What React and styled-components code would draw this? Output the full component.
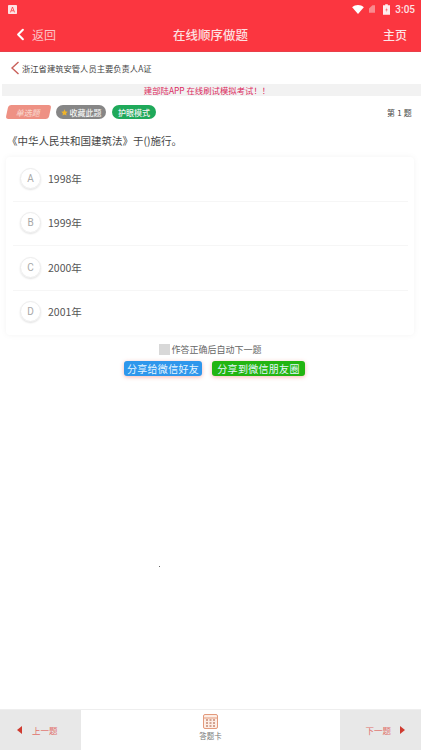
import React from 'react';
import styled, { createGlobalStyle } from 'styled-components';
import { ChevronLeft } from 'lucide-react';

const CJK = `"Noto Sans CJK SC", "Noto Sans", sans-serif`;

const GlobalStyle = createGlobalStyle`
  html, body { margin: 0; padding: 0; background: #fff; }
  body { font-family: ${CJK}; }
  * { box-sizing: border-box; }
`;

const Page = styled.div`
  position: relative;
  width: 421px;
  height: 750px;
  display: flex;
  flex-direction: column;
  overflow: hidden;
  background: #fff;
`;

const RedTop = styled.div`
  background: #fb3640;
  height: 52px;
  display: flex;
  flex-direction: column;
  border-bottom: 1px solid #e8404a;
`;

const StatusBar = styled.div`
  height: 18px;
  padding: 0 6px 0 8px;
  display: flex;
  align-items: center;
  justify-content: space-between;
`;

const StatusRight = styled.div`
  display: flex;
  align-items: center;
`;

const Clock = styled.span`
  font-family: Roboto, sans-serif;
  font-size: 10px;
  font-weight: 500;
  color: #fde3e4;
  margin-left: 5px;
`;

const NavBar = styled.div`
  flex: 1;
  padding: 0 14px;
  display: grid;
  grid-template-columns: 1fr auto 1fr;
  align-items: center;
`;

const BackLink = styled.div`
  display: flex;
  align-items: center;
  gap: 3px;
  font-size: 12px;
  color: #fcc5c8;
`;

const NavTitle = styled.div`
  font-size: 12.5px;
  font-weight: 500;
  color: #fde0e1;
`;

const HomeLink = styled.div`
  justify-self: end;
  font-size: 12px;
  font-weight: 500;
  color: #fde6e7;
`;

const Crumb = styled.div`
  height: 32px;
  padding: 0 10px;
  display: flex;
  align-items: center;
  gap: 2px;
  font-size: 8.300px;
  color: #444;
`;

const Notice = styled.div`
  height: 12px;
  margin-left: 2px;
  padding-right: 9px;
  background: #f2f2f2;
  display: flex;
  align-items: center;
  justify-content: center;
  font-size: 8.400px;
  line-height: 12px;
  color: #dc2a5e;
`;

const TagRow = styled.div`
  margin-top: 9px;
  height: 14px;
  padding: 0 8px 0 7px;
  display: flex;
  align-items: center;
  gap: 6px;
`;

const Tag = styled.span`
  height: 14px;
  width: ${p => p.$w}px;
  display: flex;
  align-items: center;
  justify-content: center;
  gap: 2px;
  border-radius: 7px;
  font-size: 8px;
  font-weight: 500;
  color: #f3f3f3;
  background: ${p => p.$bg};
`;

const TypeTag = styled(Tag)`
  border-radius: 3px;
  transform: skewX(-12deg);
  color: #f8d2c8;
`;

const PageNo = styled.span`
  margin-left: auto;
  margin-right: 1px;
  font-size: 8px;
  letter-spacing: 0.2px;
  color: #444;
`;

const Question = styled.div`
  margin-top: 13px;
  padding-left: 7px;
  height: 18px;
  font-size: 10.500px;
  line-height: 18px;
  color: #444;
`;

const OptionCard = styled.div`
  margin: 7px 7px 0 6px;
  height: 178px;
  padding: 0 6px 0 7px;
  background: #fff;
  border-radius: 4px;
  box-shadow: 0 0 6px rgba(0, 0, 0, 0.05);
`;

const OptionRow = styled.div`
  height: 44.500px;
  display: flex;
  align-items: center;
  gap: 7px;
  padding: 0 0 1px 7px;
  border-bottom: 1px solid ${p => (p.$last ? 'transparent' : '#f6f6f6')};
`;

const OptionBadge = styled.span`
  width: 21px;
  height: 21px;
  border-radius: 50%;
  display: flex;
  align-items: center;
  justify-content: center;
  font-family: Roboto, sans-serif;
  font-size: 10px;
  color: #a8a8a8;
  border: 1px solid #ececec;
  box-shadow: 0 1px 2px rgba(0, 0, 0, 0.12);
`;

const OptionText = styled.span`
  font-size: 10.500px;
  color: #555;
`;

const AutoNext = styled.div`
  margin-top: 8px;
  height: 12px;
  display: flex;
  align-items: center;
  justify-content: center;
  gap: 1px;
  font-size: 9px;
  color: #666;
`;

const CheckBox = styled.span`
  width: 11px;
  height: 11px;
  background: #d8d8d8;
`;

const ShareRow = styled.div`
  margin-top: 6px;
  display: flex;
  justify-content: center;
  gap: 10px;
  padding-left: 8px;
`;

const ShareButton = styled.span`
  height: 15px;
  width: ${p => p.$w}px;
  border-radius: 3px;
  display: flex;
  align-items: center;
  justify-content: center;
  font-size: 10px;
  letter-spacing: 0.3px;
  color: #e6f5ff;
  background: ${p => p.$bg};
  box-shadow: 0 1px 4px rgba(240, 90, 80, 0.45);
`;

const Spacer = styled.div`
  flex: 1;
`;

const Speck = styled.span`
  position: absolute;
  left: 159px;
  top: 566px;
  width: 1px;
  height: 1px;
  background: #666;
`;

const BottomBar = styled.div`
  height: 41px;
  display: grid;
  grid-template-columns: 81px 1fr 81px;
  border-top: 1px solid #eee;
`;

const PagerButton = styled.div`
  background: #e8e8e8;
  display: flex;
  align-items: center;
  justify-content: ${p => (p.$prev ? 'flex-start' : 'flex-end')};
  gap: ${p => (p.$prev ? 10 : 9)}px;
  padding: 0 16px 1px 17px;
  font-size: 8.500px;
  color: #e0706a;
`;

const Arrow = styled.span`
  width: 0;
  height: 0;
  border-top: 4px solid transparent;
  border-bottom: 4px solid transparent;
  ${p =>
    p.$left
      ? 'border-right: 5px solid #cf3b30;'
      : 'border-left: 5px solid #cf3b30;'}
`;

const CardLink = styled.div`
  display: flex;
  flex-direction: column;
  align-items: center;
  padding-top: 4px;
  font-size: 7.500px;
  line-height: 14px;
  color: #777;
`;

const options = [
  ['A', '1998年'],
  ['B', '1999年'],
  ['C', '2000年'],
  ['D', '2001年'],
];

const SheetIcon = () => (
  <svg width="15" height="15" viewBox="0 0 15 15">
    <rect x="0.5" y="0.5" width="14" height="14" rx="1.5" fill="#fdeee6" stroke="#e39a7c" />
    <path d="M1 4h13" stroke="#e39a7c" />
    {[6, 9, 12].map(y => (
      <path key={y} d="M3 0h2M6.5 0h2M10 0h2" transform={`translate(0 ${y})`} stroke="#a9583c" />
    ))}
  </svg>
);

export default function App() {
  return (
    <Page>
      <GlobalStyle />
      <RedTop>
        <StatusBar>
          <svg width="9" height="9" viewBox="0 0 11 11">
            <rect width="11" height="11" rx="1" fill="#fde3e4" />
            <path d="M3 9 5.5 2.5 8 9M4 7h3" stroke="#fb3640" fill="none" />
          </svg>
          <StatusRight>
            <svg width="14" height="9" viewBox="0 0 13 10">
              <path d="M0 2.5C3.5-.8 9.500-.8 13 2.500L6.500 10Z" fill="#fff" />
            </svg>
            <svg width="6" height="8" viewBox="0 0 7 9" style={{ marginLeft: 4 }}>
              <path d="M7 0v9H0V4L4 0Z" fill="#f98a8f" />
            </svg>
            <svg width="7" height="11" viewBox="0 0 8 12" style={{ marginLeft: 8 }}>
              <path d="M2.500 0h3v1.200H8V12H0V1.200h2.500Z" fill="#fdeeee" />
              <path d="M4.500 3.500 2.800 6.800h1.500l-.8 2.500 1.800-3.300H3.800Z" fill="#fb3640" />
            </svg>
            <Clock>3:05</Clock>
          </StatusRight>
        </StatusBar>
        <NavBar>
          <BackLink>
            <ChevronLeft size={19} strokeWidth={2.6} color="#fff" style={{ marginLeft: -3, marginRight: -1 }} />
            返回
          </BackLink>
          <NavTitle>在线顺序做题</NavTitle>
          <HomeLink>主页</HomeLink>
        </NavBar>
      </RedTop>
      <Crumb>
        <svg width="10" height="14" viewBox="0 0 10 14">
          <path d="M8.500 1 2 7l6.500 6" fill="none" stroke="#c9605a" strokeWidth="1.400" />
        </svg>
        浙江省建筑安管人员主要负责人A证
      </Crumb>
      <Notice>建部陆APP 在线刷试模拟考试！！</Notice>
      <TagRow>
        <TypeTag $w={43} $bg="#ee9184">单选题</TypeTag>
        <Tag $w={50} $bg="#868686">
          <svg width="7" height="7" viewBox="0 0 24 24">
            <path d="M12 1l3.400 7.300 7.600 1-5.600 5.300 1.500 8L12 18.600 5.100 22.600l1.500-8L1 9.300l7.600-1Z" fill="#f0b429" />
          </svg>
          收藏此题
        </Tag>
        <Tag $w={44} $bg="#1fa95a">护眼模式</Tag>
        <PageNo>第 1 题</PageNo>
      </TagRow>
      <Question>《中华人民共和国建筑法》于()施行。</Question>
      <OptionCard>
        {options.map(([key, text], i) => (
          <OptionRow key={key} $last={i === options.length - 1}>
            <OptionBadge>{key}</OptionBadge>
            <OptionText>{text}</OptionText>
          </OptionRow>
        ))}
      </OptionCard>
      <AutoNext>
        <CheckBox />
        作答正确后自动下一题
      </AutoNext>
      <ShareRow>
        <ShareButton $w={78} $bg="#2f97ec">分享给微信好友</ShareButton>
        <ShareButton $w={93} $bg="#22b512">分享到微信朋友圈</ShareButton>
      </ShareRow>
      <Spacer />
      <Speck />
      <BottomBar>
        <PagerButton $prev>
          <Arrow $left />
          上一题
        </PagerButton>
        <CardLink>
          <SheetIcon />
          答题卡
        </CardLink>
        <PagerButton>
          下一题
          <Arrow />
        </PagerButton>
      </BottomBar>
    </Page>
  );
}
